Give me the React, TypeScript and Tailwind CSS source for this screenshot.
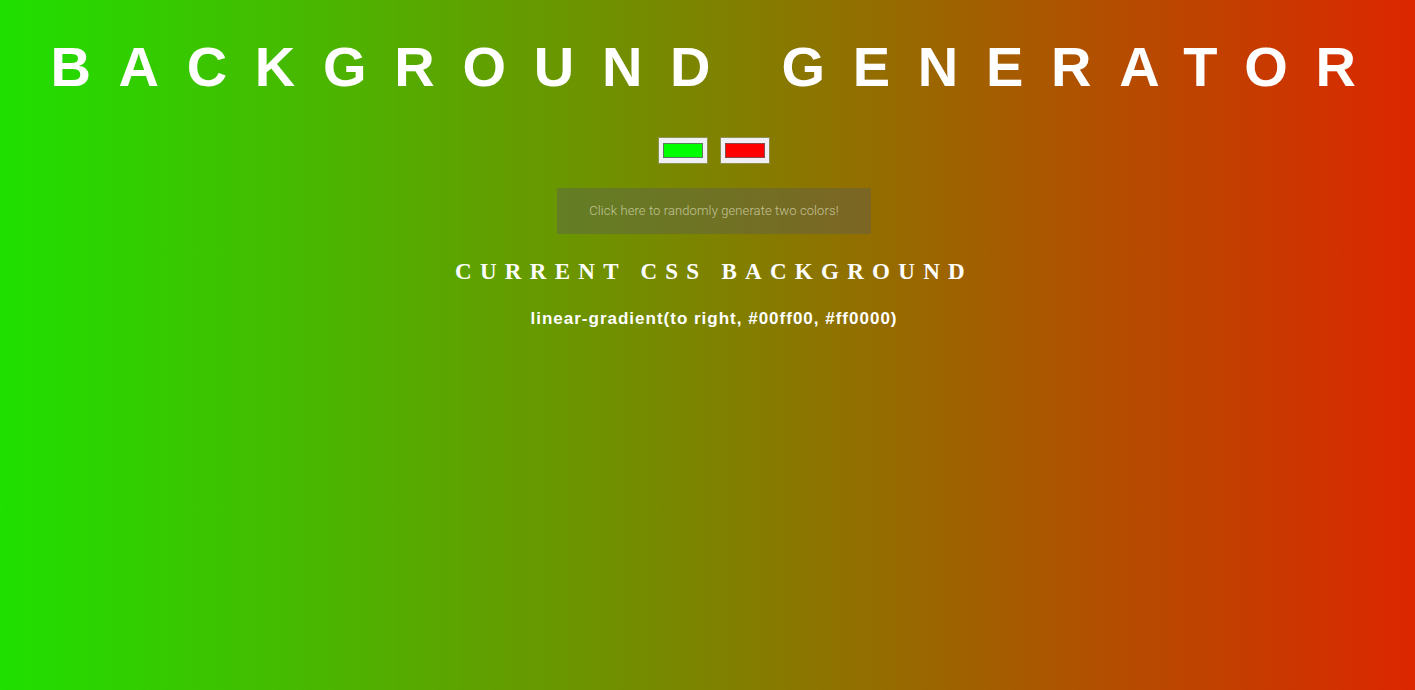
import React from 'react';

export default function App() {
  return (
    <div className="min-h-screen h-[690px] pl-[13px] bg-[linear-gradient(to_right,#1fe000,#dc2600)] text-center overflow-hidden">
      <h1 className="pt-[38px] pl-[6px] text-[56px] leading-[58px] font-bold text-white tracking-[0.495em] font-['Liberation_Sans',Arial,sans-serif]">
        BACKGROUND GENERATOR
      </h1>

      <div className="mt-[42px] flex justify-center gap-[14px]">
        <div className="w-[48px] h-[25px] bg-[#f0f0f4] px-[4px] py-[5px] shadow-[0_0_0_1px_rgba(160,160,160,0.5)]">
          <div className="w-full h-full bg-[#00ff00] border border-[#5c7a5c]" />
        </div>
        <div className="w-[48px] h-[25px] bg-[#f0f0f4] px-[4px] py-[5px] shadow-[0_0_0_1px_rgba(160,160,160,0.5)]">
          <div className="w-full h-full bg-[#ff0000] border border-[#8a4a4a]" />
        </div>
      </div>

      <div className="mt-[25px] flex justify-center">
        <button className="w-[314px] h-[46px] bg-[rgba(90,90,90,0.4)] text-[rgba(230,230,200,0.7)] text-[13px] font-['Roboto',sans-serif] font-light tracking-[0.1px]">
          Click here to randomly generate two colors!
        </button>
      </div>

      <h3 className="mt-[25px] text-[23px] leading-[26px] font-bold text-white tracking-[0.36em] font-['Liberation_Serif','Times_New_Roman',serif]">
        CURRENT CSS BACKGROUND
      </h3>

      <p className="mt-[24px] text-[17px] leading-[20px] font-bold text-white tracking-[1px] font-['Liberation_Sans',Arial,sans-serif]">
        linear-gradient(to right, #00ff00, #ff0000)
      </p>
    </div>
  );
}
